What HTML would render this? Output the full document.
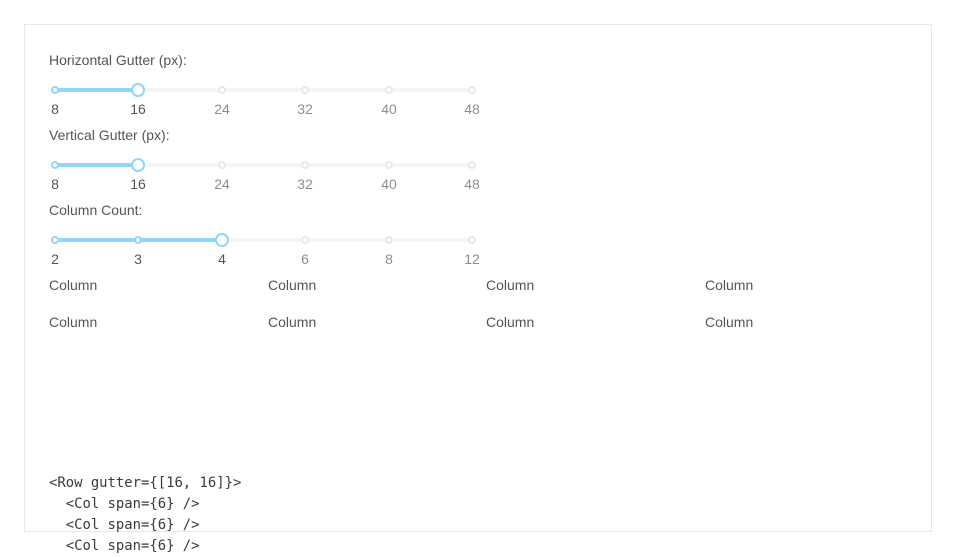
<!DOCTYPE html>
<html><head><meta charset="utf-8"><style>
*{margin:0;padding:0;box-sizing:border-box}
body{width:956px;height:556px;background:#fff;position:relative;overflow:hidden;font-family:"Liberation Sans",sans-serif;font-size:14px;color:rgba(0,0,0,.68)}
.box{position:absolute;left:24px;top:24px;width:908px;height:508px;border:1px solid #e8e8e8}
.t{position:absolute;white-space:nowrap;line-height:16px}
.rail{position:absolute;height:4px;background:#f5f5f5;border-radius:2px;left:55px;width:417px}
.trk{position:absolute;height:4px;background:#91d5ff;border-radius:2px;left:55px}
.dot{position:absolute;width:8px;height:8px;border-radius:50%;background:#fff;border:2px solid #e8e8e8}
.dot.a{border-color:#91d5ff}
.h{position:absolute;width:14px;height:14px;border-radius:50%;background:#fff;border:2px solid #91d5ff}
.m{position:absolute;width:40px;margin-left:-20px;text-align:center;line-height:16px;color:rgba(0,0,0,.45)}
.m.a{color:rgba(0,0,0,.68)}
pre{position:absolute;left:49px;top:473px;font-family:"DejaVu Sans Mono","Liberation Mono",monospace;font-size:13.9px;line-height:21px;color:#3a3a3a}
</style></head><body>
<div class="box"></div>
<div class="t" style="left:49px;top:52px">Horizontal Gutter (px):</div>
<div class="rail" style="top:88px"></div><div class="trk" style="top:88px;width:83px"></div>
<div class="dot a" style="left:51px;top:86px"></div>
<div class="dot" style="left:218px;top:86px"></div><div class="dot" style="left:301px;top:86px"></div><div class="dot" style="left:385px;top:86px"></div><div class="dot" style="left:468px;top:86px"></div>
<div class="h" style="left:131px;top:83px"></div>
<div class="m a" style="left:55px;top:101px">8</div><div class="m a" style="left:138px;top:101px">16</div><div class="m" style="left:222px;top:101px">24</div><div class="m" style="left:305px;top:101px">32</div><div class="m" style="left:389px;top:101px">40</div><div class="m" style="left:472px;top:101px">48</div>

<div class="t" style="left:49px;top:127px">Vertical Gutter (px):</div>
<div class="rail" style="top:163px"></div><div class="trk" style="top:163px;width:83px"></div>
<div class="dot a" style="left:51px;top:161px"></div>
<div class="dot" style="left:218px;top:161px"></div><div class="dot" style="left:301px;top:161px"></div><div class="dot" style="left:385px;top:161px"></div><div class="dot" style="left:468px;top:161px"></div>
<div class="h" style="left:131px;top:158px"></div>
<div class="m a" style="left:55px;top:176px">8</div><div class="m a" style="left:138px;top:176px">16</div><div class="m" style="left:222px;top:176px">24</div><div class="m" style="left:305px;top:176px">32</div><div class="m" style="left:389px;top:176px">40</div><div class="m" style="left:472px;top:176px">48</div>

<div class="t" style="left:49px;top:202px">Column Count:</div>
<div class="rail" style="top:238px"></div><div class="trk" style="top:238px;width:167px"></div>
<div class="dot a" style="left:51px;top:236px"></div><div class="dot a" style="left:134px;top:236px"></div>
<div class="dot" style="left:301px;top:236px"></div><div class="dot" style="left:385px;top:236px"></div><div class="dot" style="left:468px;top:236px"></div>
<div class="h" style="left:215px;top:233px"></div>
<div class="m a" style="left:55px;top:251px">2</div><div class="m a" style="left:138px;top:251px">3</div><div class="m a" style="left:222px;top:251px">4</div><div class="m" style="left:305px;top:251px">6</div><div class="m" style="left:389px;top:251px">8</div><div class="m" style="left:472px;top:251px">12</div>

<div class="t" style="left:49px;top:277px">Column</div><div class="t" style="left:268px;top:277px">Column</div><div class="t" style="left:486px;top:277px">Column</div><div class="t" style="left:705px;top:277px">Column</div>
<div class="t" style="left:49px;top:314px">Column</div><div class="t" style="left:268px;top:314px">Column</div><div class="t" style="left:486px;top:314px">Column</div><div class="t" style="left:705px;top:314px">Column</div>

<pre>&lt;Row gutter={[16, 16]}&gt;
  &lt;Col span={6} /&gt;
  &lt;Col span={6} /&gt;
  &lt;Col span={6} /&gt;</pre>
</body></html>
